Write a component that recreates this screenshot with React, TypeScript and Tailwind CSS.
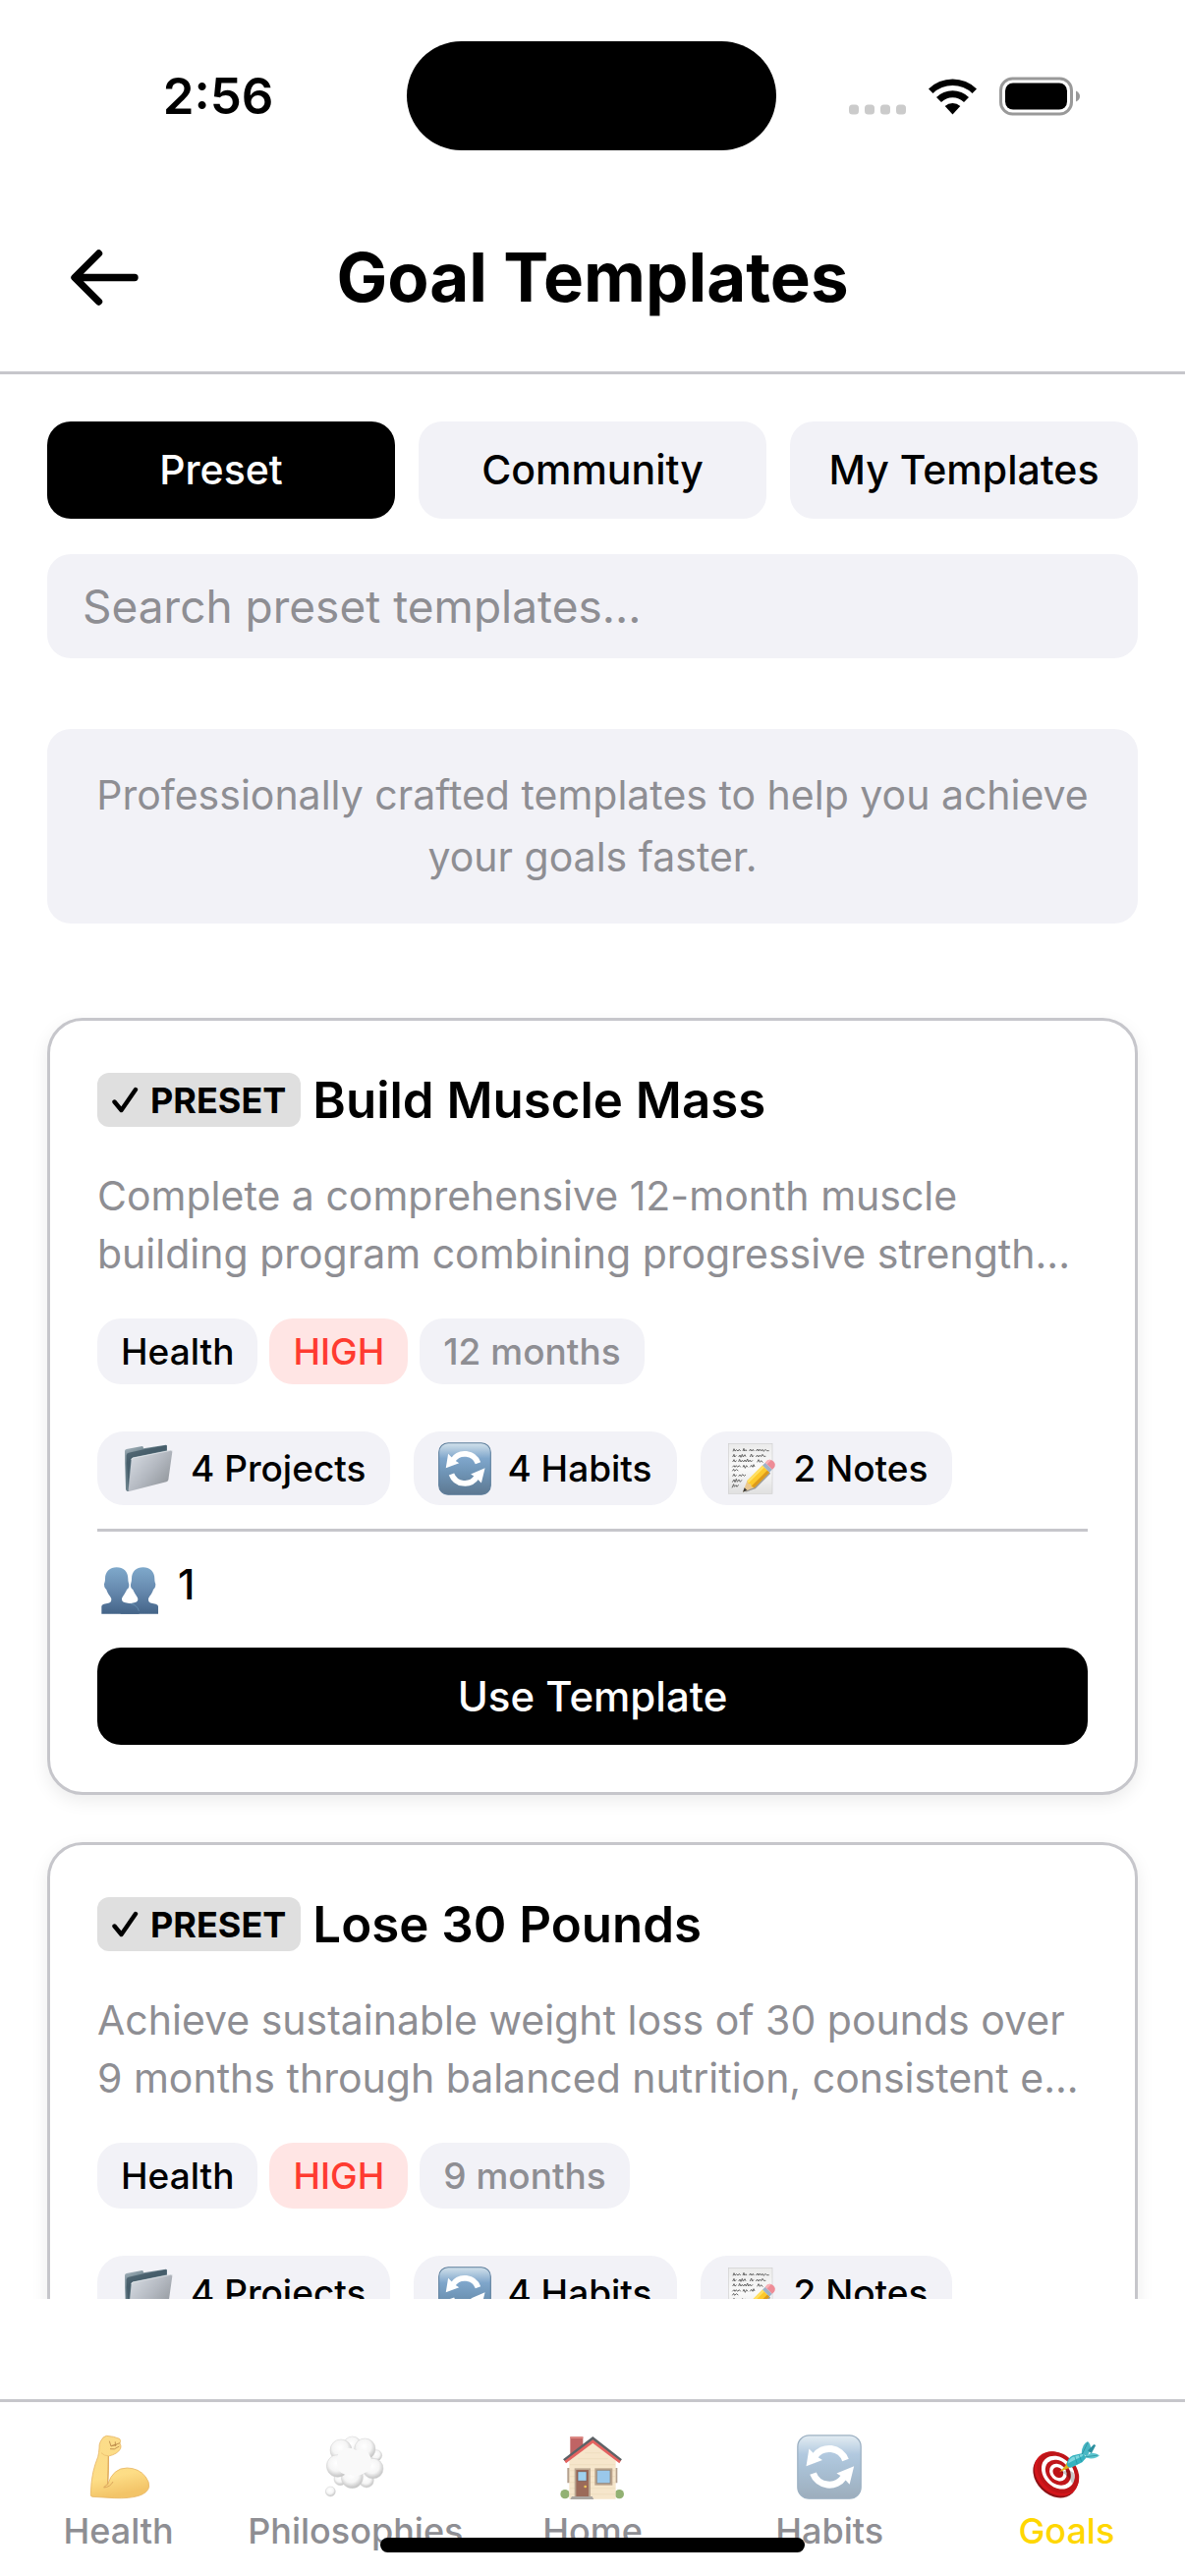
import React, { useState } from 'react';

interface Template {
  id: string;
  title: string;
  description: string;
  category: string;
  priority: string;
  duration: string;
  projects: number;
  habits: number;
  notes: number;
  users: number;
}

interface IconProps {
  className?: string;
}

const templates: Template[] = [
  {
    id: 'muscle',
    title: 'Build Muscle Mass',
    description: 'Complete a comprehensive 12-month muscle building program combining progressive strength...',
    category: 'Health',
    priority: 'HIGH',
    duration: '12 months',
    projects: 4,
    habits: 4,
    notes: 2,
    users: 1,
  },
  {
    id: 'weight',
    title: 'Lose 30 Pounds',
    description: 'Achieve sustainable weight loss of 30 pounds over 9\u00a0months through balanced nutrition, consistent e...',
    category: 'Health',
    priority: 'HIGH',
    duration: '9 months',
    projects: 4,
    habits: 4,
    notes: 2,
    users: 1,
  },
];

const tabs = ['Preset', 'Community', 'My Templates'];

/* ---------- Icons ---------- */

const FolderIcon: React.FC<IconProps> = ({ className }) => (
  <svg viewBox="0 0 162 162" className={className} aria-hidden="true">
    <defs>
      <linearGradient id="folderBack" x1="0" y1="0" x2="0.4" y2="1">
        <stop offset="0" stopColor="#b4c0c7" />
        <stop offset="0.35" stopColor="#5d7581" />
        <stop offset="1" stopColor="#6f838d" />
      </linearGradient>
      <linearGradient id="folderFront" x1="0" y1="0.1" x2="1" y2="0.9">
        <stop offset="0" stopColor="#d8dde4" />
        <stop offset="0.5" stopColor="#b4b9c1" />
        <stop offset="1" stopColor="#8b9095" />
      </linearGradient>
    </defs>
    <path d="M9 27q0-5 5-6l48-9q4 0 4 7l68-11q4 0 4 4v20L32 52 22 150l-5 0q-4-1-5-6z" fill="url(#folderBack)" />
    <path d="M70 21l66-11v14L34 46q-6 2-7 8l-8 84-5-98q1-7 7-8z" fill="#3f5663" opacity="0.75" />
    <path d="M34 47l115-23q6-1 5 5l-12 86q-1 5-6 6L22 150q-3 0-2-4l9-92q1-6 5-7z" fill="url(#folderFront)" />
    <path d="M29 54q1-5 5-6l115-23q5-1 5 4" fill="none" stroke="#eef1f4" strokeWidth="2" />
  </svg>
);

const RefreshIcon: React.FC<IconProps> = ({ className }) => (
  <svg viewBox="0 0 160 160" className={className} aria-hidden="true">
    <defs>
      <linearGradient id="refreshBg" x1="0" y1="0" x2="0" y2="1">
        <stop offset="0" stopColor="#d3e2ec" />
        <stop offset="0.3" stopColor="#7fa6cb" />
        <stop offset="0.55" stopColor="#7096b8" />
        <stop offset="1" stopColor="#5d7891" />
      </linearGradient>
    </defs>
    <rect x="2" y="2" width="156" height="156" rx="28" fill="url(#refreshBg)" stroke="#5c7d9b" strokeWidth="3" />
    <g fill="none" stroke="#fff" strokeWidth="17">
      <path d="M120 63A43 43 0 0 0 44 54" />
      <path d="M40 96A43 43 0 0 0 116 105" />
    </g>
    <path d="M30 35l-7 43 40-15-14-9z" fill="#fff" />
    <path d="M130 123l11-45-43 18 15 9z" fill="#fff" />
  </svg>
);

const NoteIcon: React.FC<IconProps> = ({ className }) => (
  <svg viewBox="0 0 162 162" className={className} aria-hidden="true">
    <defs>
      <linearGradient id="notePage" x1="0" y1="0" x2="0" y2="1">
        <stop offset="0" stopColor="#ebebeb" />
        <stop offset="0.5" stopColor="#fafafa" />
        <stop offset="1" stopColor="#e0e0e0" />
      </linearGradient>
    </defs>
    <rect x="10" y="4" width="134" height="153" fill="url(#notePage)" stroke="#cfcfcf" strokeWidth="2" />
    <g fill="none" stroke="#5f5f5f" strokeWidth="2.8" strokeLinejoin="round">
      <path d="M24 28l3-8 3 7 5-4 4 4 4-5 4 5M54 27l3-8 2 8 4-4 3 4M74 27l3-6 4 6 4-5 3 5M94 27l5-6 3 6 4-6 4 6 4-5 4 6 5-6 4 4h7" />
      <path d="M23 45l4-8 2 8 5-5M41 45l4-6 3 7 4-9 3 8 5-7 3 6M76 45l4-9 3 9 4-5M94 45l4-6 4 6 4-6 4 5 4-7 4 6h6" />
      <path d="M23 60l4-7 3 7 5-4M41 60l3-8 4 8 4-5 4 5 4-6 4 6 4-9 3 9 5-6 3 6 5-5M98 61l4-8 4 8 4-5 5 6" />
      <path d="M22 76l5-5 3 5 4-5 4 5 5-5 4 5M54 76l3-6 4 9 4-8 4 5M76 76l4-6 4 6 3-8 3 7" />
      <path d="M22 88l4-6 3 6 5-5 6 4M23 104l4-7 3 7 5-4M41 104l4-5 4 5 4-6 5 5 5-4" />
      <path d="M22 122l5-8 3 8 4-10 3 9 5-7 4 7 5-6M21 139l5-11 2 8 5-5 3 5 5-6" />
    </g>
    <g transform="translate(54 152) rotate(-45)">
      <path d="M4 5L34 20h66v-8z" fill="#000" opacity="0.35" />
      <path d="M0 0L34-15v30z" fill="#eac78f" />
      <path d="M0 0L13-6v12z" fill="#3a3a3a" />
      <path d="M34-15h66v30H34l-4-8 4-7-4-7z" fill="#fdc92b" />
      <path d="M34-15h66v8H31z" fill="#ffe064" />
      <path d="M32 6h68v9H34z" fill="#dd9a1b" />
      <path d="M100-15h12v30h-12z" fill="#9fb2c8" />
      <path d="M112-15h8q12 2 12 15t-12 15h-8z" fill="#ee8c97" />
      <path d="M112-15h8q8 1 10 7h-18z" fill="#f8b2b8" />
    </g>
  </svg>
);

const personPath =
  'M47 1C27 1 12 14 12 36C12 42 11 46 9 52C9 62 12 66 16 69C19 82 31 92 31 98C31 106 28 108 22 110L8 113Q1 115 1 120V143H116C116 126 108 116 96 113L74 109C66 107 63 104 63 98C63 92 74 80 78 69C82 66 86 62 85 53C83 46 82 42 82 36C82 14 68 1 47 1Z';

const UsersIcon: React.FC<IconProps> = ({ className }) => (
  <svg viewBox="0 -36 174 180" className={className} aria-hidden="true">
    <defs>
      <linearGradient id="usersFill" x1="0" y1="0" x2="0" y2="1">
        <stop offset="0" stopColor="#7fa9cb" />
        <stop offset="0.5" stopColor="#6689ae" />
        <stop offset="1" stopColor="#446488" />
      </linearGradient>
    </defs>
    <path d={personPath} fill="url(#usersFill)" transform="translate(175 0) scale(-1 1)" />
    <path d={personPath} fill="url(#usersFill)" />
    <path d="M90 112q20 4 25 22" fill="none" stroke="#6f9cbb" strokeWidth="2" />
  </svg>
);

const ArmIcon: React.FC<IconProps> = ({ className }) => (
  <svg viewBox="0 0 198 198" className={className} aria-hidden="true">
    <defs>
      <linearGradient id="armFill" x1="0" y1="0" x2="0.2" y2="1">
        <stop offset="0" stopColor="#fbdc8a" />
        <stop offset="0.7" stopColor="#fddd86" />
        <stop offset="1" stopColor="#f3c468" />
      </linearGradient>
    </defs>
    <path
      d="M61 4q22 1 40 9 5 5 1 14 5 8 2 16-9 17-37 23 2 42-2 86 16-50 59-50 36 1 56 26 13 17 11 32-4 18-31 27-30 9-74 7l-68-4q-6-1-5-8 1-38 7-66 5-23 15-48 3-11 4-26-1-12 4-21 7-15 18-17z"
      fill="url(#armFill)"
      stroke="#e8b765"
      strokeWidth="2.5"
    />
    <path d="M67 66l-2 86q-7 2-12 10 20-2 28-18" fill="none" stroke="#dca65c" strokeWidth="3" />
    <path d="M70 20l5 16 27-10M76 34l16-2M88 22v14M72 44q12 5 28-8" fill="none" stroke="#b98747" strokeWidth="2.5" />
    <path d="M45 56q10 10 22 9" fill="none" stroke="#eec372" strokeWidth="3" />
  </svg>
);

const ThoughtIcon: React.FC<IconProps> = ({ className }) => (
  <svg viewBox="0 0 198 198" className={className} aria-hidden="true">
    <defs>
      <radialGradient id="puff" cx="0.45" cy="0.38" r="0.64">
        <stop offset="0" stopColor="#ffffff" />
        <stop offset="0.55" stopColor="#f5f5f5" />
        <stop offset="1" stopColor="#bdbdbd" />
      </radialGradient>
    </defs>
    <g fill="url(#puff)" stroke="#d2d2d2" strokeWidth="1.5">
      <circle cx="162" cy="64" r="17" />
      <circle cx="52" cy="136" r="19" />
      <circle cx="132" cy="140" r="22" />
      <circle cx="89" cy="34" r="28" />
      <circle cx="54" cy="48" r="33" />
      <circle cx="127" cy="44" r="32" />
      <circle cx="88" cy="131" r="33" />
      <circle cx="152" cy="104" r="31" />
      <circle cx="44" cy="96" r="34" />
      <circle cx="22" cy="174" r="15" />
    </g>
    <path d="M48 54q30-22 52-6 34-10 44 20 10 36-16 48-22 16-44 8-36 0-40-26-6-24 4-44z" fill="#f9f9f9" />
  </svg>
);

const HouseIcon: React.FC<IconProps> = ({ className }) => (
  <svg viewBox="0 0 198 198" className={className} aria-hidden="true">
    <circle cx="15" cy="182" r="14" fill="#92b173" />
    <circle cx="181" cy="182" r="14" fill="#92b173" />
    <path d="M31 7h39v40L31 72z" fill="#c06464" />
    <path d="M31 7h39v5H31z" fill="#e08a84" />
    <path d="M22 102h8v46h-8zM168 102h7v46h-7z" fill="#b3a08e" />
    <path d="M28 80l72-56 70 56v117H28z" fill="#f6e6cb" />
    <path d="M30 92h138M30 110h138M30 128h138M30 146h138M30 164h138M30 182h138M54 74h92M76 56h48" stroke="#ecd9bb" strokeWidth="2" />
    <path d="M12 78l88-66 87 66-6 10-81-62-82 62z" fill="#e4625f" />
    <path d="M9 76l91-70 89 70-5 4-84-64-86 64z" fill="#5d6266" />
    <path d="M44 103h49v88H44z" fill="#bba792" />
    <path d="M49 108h38v82H49z" fill="#9b6a5a" />
    <path d="M54 113h27v29H54z" fill="#9fd0ee" stroke="#7a5145" strokeWidth="2" />
    <circle cx="77" cy="159" r="4" fill="#edc65a" />
    <path d="M106 103h54v52h-54z" fill="#b9a38c" />
    <path d="M112 109h41v40h-41z" fill="#9ac8ea" stroke="#8b7a68" strokeWidth="2" />
    <path d="M36 189h62l5 9H31z" fill="#aaa6a2" />
  </svg>
);

const TargetIcon: React.FC<IconProps> = ({ className }) => (
  <svg viewBox="0 0 216 210" className={className} aria-hidden="true">
    <g transform="translate(73 133) rotate(45)">
      <ellipse rx="80" ry="63" fill="#8d1216" />
    </g>
    <g transform="translate(77 127) rotate(45)">
      <ellipse rx="80" ry="63" fill="#d4161c" />
    </g>
    <g transform="translate(82 123) rotate(45)">
      <ellipse rx="76" ry="59" fill="#bf1519" />
      <ellipse rx="60" ry="47" fill="#fff" />
      <ellipse rx="46" ry="36" fill="#c0161b" />
      <ellipse rx="31" ry="25" fill="#fff" />
      <ellipse rx="19" ry="15" fill="#bd1318" />
    </g>
    <path d="M92 122l24-8 16 10 4 24-8 12q-8-26-36-38z" fill="#000" opacity="0.22" />
    <path d="M86 122l20-21 4-10 14 14-9 4z" fill="#e0b21b" />
    <path d="M110 99q2-24 20-31l34-8 8 16-12 14-32 16q-12 4-18-7z" fill="#35b3c0" />
    <path d="M114 94q4-18 20-23l30-8-4 8-30 14z" fill="#7ed8df" />
    <path d="M136 70l8 26M150 66l8 22" stroke="#1f8f9e" strokeWidth="2" />
    <path d="M158 60q2-30 20-38 10 8 10 24l-12 26z" fill="#48b7c4" />
    <path d="M178 52l20-20 6 3-14 26z" fill="#2c8f9f" />
    <path d="M166 74l22-14q16-2 28 8-8 10-28 10z" fill="#5bc5cf" />
    <path d="M160 64l18-38M168 73l42-6" stroke="#217f8e" strokeWidth="2" />
  </svg>
);

const CheckMark: React.FC<IconProps> = ({ className }) => (
  <svg viewBox="0 0 27 27" className={className} aria-hidden="true">
    <path d="M2.5 15.5L9.5 24 24 3" fill="none" stroke="#000" strokeWidth="4.4" strokeLinecap="round" strokeLinejoin="round" />
  </svg>
);

const navItems = [
  { label: 'Health', Icon: ArmIcon, size: 'h-[66px] w-[66px]' },
  { label: 'Philosophies', Icon: ThoughtIcon, size: 'h-[66px] w-[66px]' },
  { label: 'Home', Icon: HouseIcon, size: 'h-[66px] w-[66px]' },
  { label: 'Habits', Icon: RefreshIcon, size: 'h-[66px] w-[66px] opacity-60' },
  { label: 'Goals', Icon: TargetIcon, size: 'h-[66px] w-[72px]' },
];

/* ---------- Sections ---------- */

const StatusBar: React.FC = () => (
  <div className="flex shrink-0 items-center pt-[42px] pb-[33px]">
    <div className="flex flex-1 justify-center pl-[30px] text-[51px] leading-[60px] font-semibold">2:56</div>
    <div className="h-[111px] w-[376px] rounded-full bg-black" />
    <div className="flex flex-1 items-center justify-center pr-8">
      <svg viewBox="0 0 236 40" className="h-10 w-[236px]" aria-hidden="true">
        <g fill="#cbcbcb">
          <rect x="0" y="28.500" width="10" height="10" rx="3.500" />
          <rect x="16" y="28.500" width="10" height="10" rx="3.500" />
          <rect x="32" y="28.500" width="10" height="10" rx="3.500" />
          <rect x="48" y="28.500" width="10" height="10" rx="3.500" />
        </g>
        <path d="M81 12.500A35 35 0 0 1 130 12.500L125.500 17A29 29 0 0 0 85.500 17z" />
        <path d="M89 21A23.500 23.500 0 0 1 122 21L117 26A16.500 16.500 0 0 0 94 26z" />
        <path d="M97.700 30A12 12 0 0 1 113.300 30L105.500 38.500z" />
        <rect x="154.500" y="2" width="72" height="36" rx="12" fill="none" stroke="#999" strokeWidth="3" />
        <rect x="159" y="6.500" width="63" height="27" rx="8" />
        <path d="M231 14.500q4 2 4 5.500t-4 5.500z" fill="#999" />
      </svg>
    </div>
  </div>
);

const Header: React.FC = () => (
  <header className="grid shrink-0 grid-cols-[141px_1fr_141px] items-center border-b-[3px] border-[#c6c6cb] py-[51px]">
    <button type="button" aria-label="Back" className="pl-[72px]">
      <svg viewBox="0 0 69 57" className="h-[57px] w-[69px]" fill="none" stroke="#000" strokeWidth="7.4" strokeLinecap="round" strokeLinejoin="round" aria-hidden="true">
        <path d="M28.500 4L4 28.500 28.500 53M6 28.500H65" />
      </svg>
    </button>
    <h1 className="text-center text-[69px] leading-[90px] font-bold">Goal Templates</h1>
  </header>
);

const TemplateCard: React.FC<{ template: Template }> = ({ template }) => {
  const stats = [
    { Icon: FolderIcon, text: `${template.projects} Projects` },
    { Icon: RefreshIcon, text: `${template.habits} Habits` },
    { Icon: NoteIcon, text: `${template.notes} Notes` },
  ];

  return (
    <article className="rounded-[36px] border-[3px] border-[#c6c6cb] bg-white p-12 shadow-[0_6px_18px_rgba(0,0,0,0.08)]">
      <div className="flex items-center gap-3">
        <span className="flex h-[55px] items-center gap-3 rounded-xl bg-[#dfdfdf] px-[15px] text-[36px] font-bold">
          <CheckMark className="h-[27px] w-[27px]" />
          PRESET
        </span>
        <h2 className="text-[51px] leading-[65px] font-semibold">{template.title}</h2>
      </div>

      <p className="mt-9 text-[41px] leading-[59px] text-[#8e8e93]">{template.description}</p>

      <div className="mt-9 flex gap-3 text-[37px] leading-[43px] font-medium">
        <span className="rounded-3xl bg-[#f2f2f7] px-6 py-3">{template.category}</span>
        <span className="rounded-3xl bg-[#ffe5e4] px-6 py-3 text-[#ff3b30]">{template.priority}</span>
        <span className="rounded-3xl bg-[#f2f2f7] px-6 py-3 text-[#8e8e93]">{template.duration}</span>
      </div>

      <div className="mt-12 flex gap-6">
        {stats.map(({ Icon, text }) => (
          <span key={text} className="flex h-[75px] items-center gap-4 rounded-[27px] bg-[#f2f2f7] px-[25px] text-[37px] font-medium">
            <Icon className="h-[54px] w-[54px]" />
            {text}
          </span>
        ))}
      </div>

      <div className="mt-6 flex items-center gap-5 border-t-[3px] border-[#c6c6cb] pt-6 pb-[34px] pl-1 text-[42px] leading-[60px] font-medium">
        <UsersIcon className="h-[60px] w-[58px]" />
        {template.users}
      </div>

      <button type="button" className="h-[99px] w-full rounded-3xl bg-black text-[42px] font-medium text-white">
        Use Template
      </button>
    </article>
  );
};

const App: React.FC = () => {
  const [activeTab, setActiveTab] = useState('Preset');
  const [query, setQuery] = useState('');

  return (
    <div className="relative flex h-screen flex-col bg-white font-['Inter','Liberation_Sans',sans-serif] text-black">
      <StatusBar />
      <Header />

      <div className="shrink-0 px-12 pt-12">
        <div className="grid grid-cols-3 gap-6">
          {tabs.map((tab) => (
            <button
              key={tab}
              type="button"
              onClick={() => setActiveTab(tab)}
              className={`h-[99px] rounded-3xl text-[41px] font-medium ${activeTab === tab ? 'bg-black text-white' : 'bg-[#f2f2f7] text-black'}`}
            >
              {tab}
            </button>
          ))}
        </div>
        <input
          type="text"
          value={query}
          onChange={(e) => setQuery(e.target.value)}
          aria-label="Search preset templates"
          placeholder="Search preset templates..."
          className="mt-9 h-[106px] w-full rounded-3xl bg-[#f2f2f7] px-9 text-[46px] outline-none placeholder:text-[#8e8e93]"
        />
      </div>

      <main className="min-h-0 flex-1 overflow-y-auto px-12 pt-[72px] [scrollbar-width:none]">
        <p className="rounded-3xl bg-[#f2f2f7] px-9 py-9 text-center text-[41px] leading-[63px] text-[#8e8e93]">
          Professionally crafted templates to help you achieve your goals faster.
        </p>
        <div className="mt-24 flex flex-col gap-12">
          {templates.map((template) => (
            <TemplateCard key={template.id} template={template} />
          ))}
        </div>
      </main>

      <nav className="mt-[102px] grid h-[180px] shrink-0 grid-cols-5 border-t-[3px] border-[#c6c6cb] bg-white pt-[33px]">
        {navItems.map(({ label, Icon, size }) => (
          <a key={label} href="#" className={`flex flex-col items-center gap-2.5 text-[36px] leading-[44px] font-medium ${label === 'Goals' ? 'text-[#ffd700]' : 'text-[#8e8e93]'}`}>
            <Icon className={size} />
            {label}
          </a>
        ))}
      </nav>

      {/* Home indicator floats over the tab labels */}
      <div className="absolute bottom-6 left-1/2 h-[15px] w-[432px] -translate-x-1/2 rounded-full bg-black" />
    </div>
  );
};

export default App;
